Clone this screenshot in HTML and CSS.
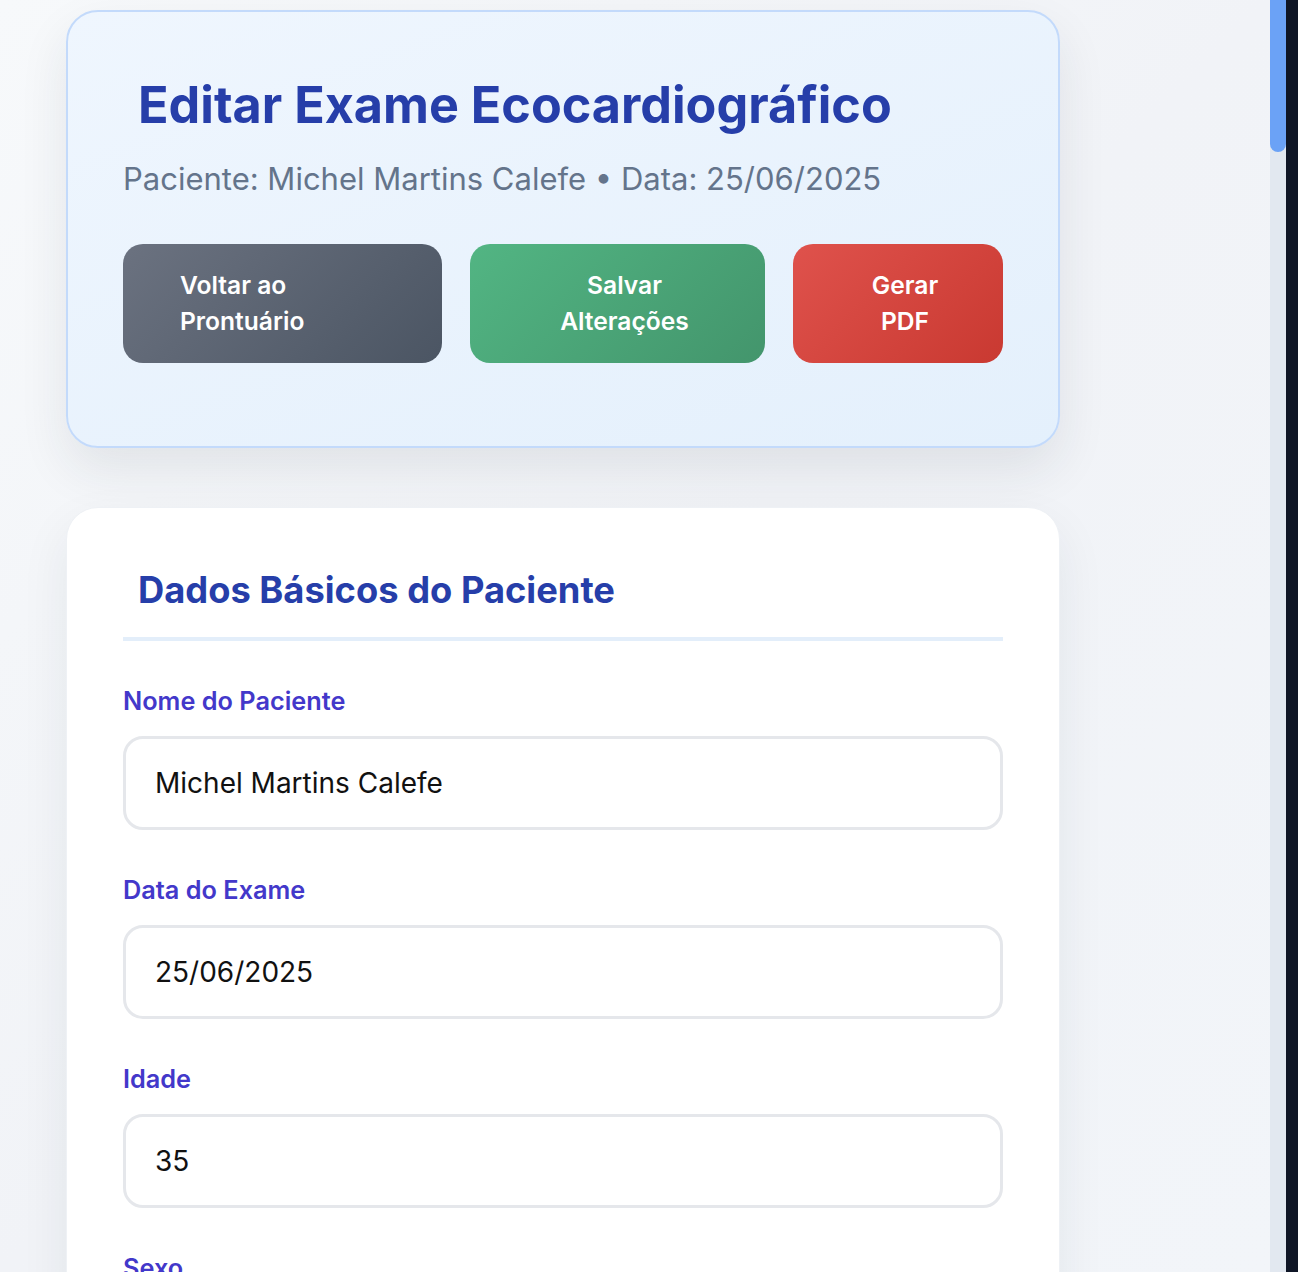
FILE: index.html
```html
<!DOCTYPE html>
<html lang="pt-BR">
<head>
<meta charset="utf-8">
<title>Editar Exame Ecocardiográfico</title>
<link rel="stylesheet" href="styles.css">
</head>
<body>
<div class="viewport">
  <main class="page">
    <section class="hero">
      <h1 class="hero-title">Editar Exame Ecocardiográfico</h1>
      <p class="hero-sub">Paciente: Michel Martins Calefe • Data: 25/06/2025</p>
      <div class="actions">
        <a class="btn btn-back" href="#"><span class="btn-text">Voltar ao Prontuário</span></a>
        <button class="btn btn-save" type="button"><span class="btn-text">Salvar Alterações</span></button>
        <button class="btn btn-pdf" type="button"><span class="btn-text">Gerar PDF</span></button>
      </div>
    </section>

    <section class="panel">
      <h2 class="panel-title">Dados Básicos do Paciente</h2>
      <div class="field">
        <label class="field-label" for="nome">Nome do Paciente</label>
        <input class="field-input" id="nome" type="text" value="Michel Martins Calefe">
      </div>
      <div class="field">
        <label class="field-label" for="data">Data do Exame</label>
        <input class="field-input" id="data" type="text" value="25/06/2025">
      </div>
      <div class="field">
        <label class="field-label" for="idade">Idade</label>
        <input class="field-input" id="idade" type="text" value="35">
      </div>
      <div class="field">
        <label class="field-label" for="sexo">Sexo</label>
        <input class="field-input" id="sexo" type="text" value="Masculino">
      </div>
    </section>
  </main>
</div>
<div class="scrollbar" aria-hidden="true">
  <div class="scrollbar-thumb"></div>
</div>
</body>
</html>
```

FILE: styles.css
```css
* { box-sizing: border-box; }

html, body { height: 100%; }

body {
  margin: 0;
  display: flex;
  padding-right: 12px;
  background: #0f1626;
  font-family: Inter, "Noto Sans", "Liberation Sans", sans-serif;
  overflow: hidden;
}

.viewport {
  flex: 1;
  height: 100vh;
  overflow: hidden;
  background: linear-gradient(135deg, #f7f9fb 0%, #f1f3f7 50%, #f2f5f9 100%);
}

.scrollbar {
  width: 16px;
  height: 100vh;
  background: #e2e8f0;
}

.scrollbar-thumb {
  height: 152px;
  background: #6ba2f6;
  border-radius: 0 0 8px 8px;
}

.page {
  width: 994px;
  margin-left: 66px;
  padding-top: 10px;
  display: flex;
  flex-direction: column;
  gap: 59px;
}

.hero {
  border: 2px solid #c3dafb;
  border-radius: 32px;
  padding: 63px 55px 83px;
  background: linear-gradient(160deg, #eff6fe 0%, #e4f0fc 100%);
  box-shadow: 0 22px 50px rgba(30, 41, 59, 0.09);
}

.hero-title {
  margin: 0;
  padding-left: 15px;
  font-size: 50.3px;
  line-height: 1.2;
  font-weight: 700;
  color: #263ea9;
}

.hero-sub {
  margin: 22px 0 0;
  font-size: 31px;
  line-height: 1.4;
  color: #64748b;
}

.actions {
  margin-top: 43px;
  display: flex;
  gap: 28px;
}

.btn {
  height: 119px;
  border: 0;
  border-radius: 20px;
  display: inline-flex;
  align-items: center;
  justify-content: center;
  font-family: inherit;
  font-size: 24.6px;
  line-height: 36px;
  font-weight: 600;
  color: #ffffff;
  text-decoration: none;
  cursor: pointer;
}

.btn-text { display: block; }

.btn-back {
  width: 319px;
  padding: 0 57px;
  text-align: left;
  background: linear-gradient(135deg, #6b7280 0%, #4b5563 100%);
}

.btn-save {
  width: 295px;
  padding: 0 56px 0 70px;
  text-align: center;
  background: linear-gradient(135deg, #52b583 0%, #43956c 100%);
}

.btn-pdf {
  width: 210px;
  padding: 0 56px 0 70px;
  text-align: center;
  background: linear-gradient(135deg, #df524c 0%, #c93931 100%);
}

.panel {
  background: #ffffff;
  border: 1px solid #eef1f5;
  border-radius: 32px;
  padding: 61px 56px 60px;
  box-shadow: 0 20px 50px rgba(30, 41, 59, 0.07);
}

.panel-title {
  margin: 0 0 42px;
  padding: 0 0 25px 15px;
  border-bottom: 4px solid #e3eefa;
  font-size: 36.3px;
  line-height: 1.2;
  font-weight: 700;
  color: #263ea9;
}

.field {
  display: flex;
  flex-direction: column;
  margin-bottom: 42px;
}

.field-label {
  font-size: 25.3px;
  line-height: 36px;
  font-weight: 600;
  color: #4338ca;
  margin-bottom: 17px;
}

.field-input {
  height: 94px;
  border: 3px solid #e5e7eb;
  border-radius: 20px;
  padding: 0 29px;
  font-family: inherit;
  font-size: 28px;
  color: #111111;
  background: #ffffff;
  outline: none;
}
```
